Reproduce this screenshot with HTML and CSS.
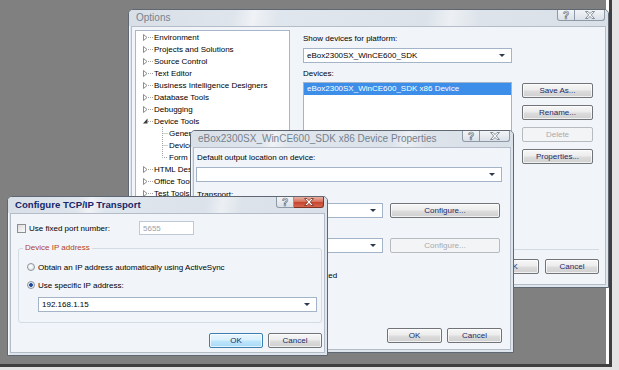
FILE: index.html
```html
<!DOCTYPE html>
<html lang="en">
<head>
    <meta charset="UTF-8">
    <title>Device Tools Options</title>
    <link rel="stylesheet" href="styles.css">
</head>
<body>

<div class="desktop">

    <!-- Options dialog (inactive, at the back) -->
    <div class="win options-win">
        <div class="titlebar">
            <span class="title">Options</span>
            <div class="caption">
                <span class="cap-help">?</span>
                <span class="cap-close"><svg width="10" height="8" viewBox="0 0 10 8"><path d="M0.5 0.5 H3 L5 2.6 L7 0.5 H9.5 L6.3 4 L9.5 7.5 H7 L5 5.4 L3 7.5 H0.5 L3.7 4 Z" fill="#f4f6f8" stroke="#6f7a86" stroke-width="0.8"/></svg></span>
            </div>
        </div>
        <div class="client">
            <div class="opt-main">
                <div class="tree">
                    <div class="node"><svg width="11" height="12"><path d="M0.5 3.5 L4 6.5 L0.5 9.5 Z" fill="#fff" stroke="#8d8d8d"/><path d="M5 6.5 H10" stroke="#a5a5a5" stroke-dasharray="1 1"/></svg>Environment</div>
                    <div class="node"><svg width="11" height="12"><path d="M0.5 3.5 L4 6.5 L0.5 9.5 Z" fill="#fff" stroke="#8d8d8d"/><path d="M5 6.5 H10" stroke="#a5a5a5" stroke-dasharray="1 1"/></svg>Projects and Solutions</div>
                    <div class="node"><svg width="11" height="12"><path d="M0.5 3.5 L4 6.5 L0.5 9.5 Z" fill="#fff" stroke="#8d8d8d"/><path d="M5 6.5 H10" stroke="#a5a5a5" stroke-dasharray="1 1"/></svg>Source Control</div>
                    <div class="node"><svg width="11" height="12"><path d="M0.5 3.5 L4 6.5 L0.5 9.5 Z" fill="#fff" stroke="#8d8d8d"/><path d="M5 6.5 H10" stroke="#a5a5a5" stroke-dasharray="1 1"/></svg>Text Editor</div>
                    <div class="node"><svg width="11" height="12"><path d="M0.5 3.5 L4 6.5 L0.5 9.5 Z" fill="#fff" stroke="#8d8d8d"/><path d="M5 6.5 H10" stroke="#a5a5a5" stroke-dasharray="1 1"/></svg>Business Intelligence Designers</div>
                    <div class="node"><svg width="11" height="12"><path d="M0.5 3.5 L4 6.5 L0.5 9.5 Z" fill="#fff" stroke="#8d8d8d"/><path d="M5 6.5 H10" stroke="#a5a5a5" stroke-dasharray="1 1"/></svg>Database Tools</div>
                    <div class="node"><svg width="11" height="12"><path d="M0.5 3.5 L4 6.5 L0.5 9.5 Z" fill="#fff" stroke="#8d8d8d"/><path d="M5 6.5 H10" stroke="#a5a5a5" stroke-dasharray="1 1"/></svg>Debugging</div>
                    <div class="node"><svg width="11" height="12"><path d="M4.5 3.5 V8.5 H0 Z" fill="#3c3c3c"/><path d="M5 6.5 H10" stroke="#a5a5a5" stroke-dasharray="1 1"/></svg>Device Tools</div>
                    <div class="node"><svg width="26" height="12"><path d="M19.5 0 V12 M19.5 6.5 H25" stroke="#a5a5a5" stroke-dasharray="1 1"/></svg>General</div>
                    <div class="node"><svg width="26" height="12"><path d="M19.5 0 V12 M19.5 6.5 H25" stroke="#a5a5a5" stroke-dasharray="1 1"/></svg>Devices</div>
                    <div class="node"><svg width="26" height="12"><path d="M19.5 0 V6.5 H25" fill="none" stroke="#a5a5a5" stroke-dasharray="1 1"/></svg>Form Factors</div>
                    <div class="node"><svg width="11" height="12"><path d="M0.5 3.5 L4 6.5 L0.5 9.5 Z" fill="#fff" stroke="#8d8d8d"/><path d="M5 6.5 H10" stroke="#a5a5a5" stroke-dasharray="1 1"/></svg>HTML Designer</div>
                    <div class="node"><svg width="11" height="12"><path d="M0.5 3.5 L4 6.5 L0.5 9.5 Z" fill="#fff" stroke="#8d8d8d"/><path d="M5 6.5 H10" stroke="#a5a5a5" stroke-dasharray="1 1"/></svg>Office Tools</div>
                    <div class="node"><svg width="11" height="12"><path d="M0.5 3.5 L4 6.5 L0.5 9.5 Z" fill="#fff" stroke="#8d8d8d"/><path d="M5 6.5 H10" stroke="#a5a5a5" stroke-dasharray="1 1"/></svg>Test Tools</div>
                    <div class="node"><svg width="11" height="12"><path d="M0.5 3.5 L4 6.5 L0.5 9.5 Z" fill="#fff" stroke="#8d8d8d"/><path d="M5 6.5 H10" stroke="#a5a5a5" stroke-dasharray="1 1"/></svg>Text Templating</div>
                    <div class="node"><svg width="11" height="12"><path d="M0.5 3.5 L4 6.5 L0.5 9.5 Z" fill="#fff" stroke="#8d8d8d"/><path d="M5 6.5 H10" stroke="#a5a5a5" stroke-dasharray="1 1"/></svg>Windows Forms Designer</div>
                </div>

                <div class="opt-devices">
                    <div class="lbl first">Show devices for platform:</div>
                    <div class="combo"><span>eBox2300SX_WinCE600_SDK</span><i class="arrow"></i></div>
                    <div class="lbl devices-lbl">Devices:</div>
                    <div class="listbox">
                        <div class="list-item selected">eBox2300SX_WinCE600_SDK x86 Device</div>
                    </div>
                </div>

                <div class="side-buttons">
                    <div class="btn">Save As...</div>
                    <div class="btn">Rename...</div>
                    <div class="btn disabled">Delete</div>
                    <div class="btn">Properties...</div>
                </div>
            </div>
            <div class="opt-foot">
                <div class="btn">OK</div>
                <div class="btn">Cancel</div>
            </div>
        </div>
    </div>

    <!-- Device Properties dialog -->
    <div class="win props-win">
        <div class="titlebar">
            <span class="title">eBox2300SX_WinCE600_SDK x86 Device Properties</span>
            <div class="caption">
                <span class="cap-help">?</span>
                <span class="cap-close"><svg width="10" height="8" viewBox="0 0 10 8"><path d="M0.5 0.5 H3 L5 2.6 L7 0.5 H9.5 L6.3 4 L9.5 7.5 H7 L5 5.4 L3 7.5 H0.5 L3.7 4 Z" fill="#f4f6f8" stroke="#6f7a86" stroke-width="0.8"/></svg></span>
            </div>
        </div>
        <div class="client props-body">
            <div class="lbl">Default output location on device:</div>
            <div class="combo output-combo"><span></span><i class="arrow"></i></div>
            <div class="lbl transport-lbl">Transport:</div>
            <div class="prop-row first-row">
                <div class="combo"><span>TCP Connect Transport</span><i class="arrow"></i></div>
                <div class="btn">Configure...</div>
            </div>
            <div class="lbl boot-lbl">Bootstrapper:</div>
            <div class="prop-row second-row">
                <div class="combo"><span>ActiveSync Startup Provider</span><i class="arrow"></i></div>
                <div class="btn disabled">Configure...</div>
            </div>
            <div class="check-row detect-row">
                <span class="checkbox"></span>
                <span>Detect when device is disconnected</span>
            </div>
            <div class="btn-row">
                <div class="btn">OK</div>
                <div class="btn">Cancel</div>
            </div>
        </div>
    </div>

    <!-- Configure TCP/IP Transport dialog (active) -->
    <div class="win tcp-win active">
        <div class="titlebar">
            <span class="title">Configure TCP/IP Transport</span>
            <div class="caption">
                <span class="cap-help">?</span>
                <span class="cap-close"><svg width="10" height="8" viewBox="0 0 10 8"><path d="M0.5 0.5 H3 L5 2.6 L7 0.5 H9.5 L6.3 4 L9.5 7.5 H7 L5 5.4 L3 7.5 H0.5 L3.7 4 Z" fill="#fff" stroke="#7b2b1d" stroke-width="0.8"/></svg></span>
            </div>
        </div>
        <div class="client tcp-body">
            <div class="port-row">
                <span class="checkbox"></span>
                <span class="port-lbl">Use fixed port number:</span>
                <div class="textbox disabled">5655</div>
            </div>
            <fieldset class="group">
                <legend>Device IP address</legend>
                <div class="radio-row">
                    <span class="radio"></span>
                    <span>Obtain an IP address automatically using ActiveSync</span>
                </div>
                <div class="radio-row second">
                    <span class="radio on"></span>
                    <span>Use specific IP address:</span>
                </div>
                <div class="combo ip-combo"><span>192.168.1.15</span><i class="arrow"></i></div>
            </fieldset>
            <div class="btn-row tcp-buttons">
                <div class="btn default">OK</div>
                <div class="btn">Cancel</div>
            </div>
        </div>
    </div>

</div>

</body>
</html>
```

FILE: styles.css
```css
body {
    margin: 0;
    background: #e4e4e4;
    font-family: "Liberation Sans", Arial, sans-serif;
    font-size: 8px;
    color: #000;
}

/* backdrop behind the dialogs */
.desktop {
    position: relative;
    width: 609px;
    height: 364px;
    background: #808080;
    box-shadow: inset -3px 0 0 #fdfdfd;
    border-right: 3px solid #3f3f3f;
    border-bottom: 3px solid #3f3f3f;
    overflow: hidden;
}

/* window chrome */
.win {
    position: absolute;
    box-sizing: border-box;
    display: flex;
    flex-direction: column;
    padding: 0 2px 2px;
    border: 1px solid #5e6772;
    border-radius: 5px 5px 0 0;
    background: #dfe5ec;
    box-shadow: inset 1px 1px 0 #f7f9fb;
}
.options-win { left: 128px; top: 9px; width: 481px; height: 279px; }
.props-win { left: 190px; top: 130px; width: 324px; height: 223px; }
.tcp-win { left: 7px; top: 196px; width: 321px; height: 160px; }

.titlebar {
    height: 16px;
    margin: 0 -2px;
    padding: 0 3px 0 7px;
    display: flex;
    align-items: flex-start;
    border-radius: 4px 4px 0 0;
    background: linear-gradient(100deg, #d8dfe7 0%, #dfe5ec 22%, #eff2f6 26%, #e0e6ed 31%, #dbe2ea 62%, #ecf0f4 67%, #dde3ea 73%, #d9e0e8 100%);
}
.title {
    line-height: 16px;
    font-size: 10px;
    color: #76818e;
    white-space: nowrap;
}
.active .title {
    font-size: 9.6px;
    font-weight: bold;
    color: #17276a;
}
.caption {
    margin-left: auto;
    display: flex;
}
.cap-help, .cap-close {
    height: 11px;
    box-sizing: border-box;
    display: flex;
    align-items: center;
    justify-content: center;
    border: 1px solid #8e99a6;
    border-top: 0;
    background: linear-gradient(#f2f4f7, #dbe1e8);
}
.cap-help {
    width: 18px;
    border-radius: 0 0 0 3px;
    font-size: 10px;
    font-weight: bold;
    color: #f4f6f8;
    -webkit-text-stroke: 0.7px #6f7a86;
}
.cap-close {
    width: 30px;
    border-left: 0;
    border-radius: 0 0 3px 0;
}
.active .cap-close {
    border-color: #7d3326;
    background: linear-gradient(#eab1a3 0%, #d67560 45%, #c6452f 55%, #d7664d 100%);
}

.client {
    flex: 1;
    min-height: 0;
    border: 1px solid #b3bcc7;
    background: #f1f4f9;
}

/* shared controls */
.lbl {
    line-height: 12px;
    white-space: nowrap;
}
.btn {
    height: 15px;
    box-sizing: border-box;
    display: flex;
    align-items: center;
    justify-content: center;
    border: 1px solid #707479;
    border-radius: 2px;
    background: linear-gradient(#f7f7f7 0%, #ececec 48%, #dddddd 52%, #cfcfcf 100%);
    box-shadow: inset 0 0 0 1px rgba(255, 255, 255, 0.7);
    color: #1c2a66;
    white-space: nowrap;
}
.btn.disabled {
    border-color: #b7babe;
    background: #f3f4f5;
    box-shadow: none;
    color: #a7abb0;
}
.btn.default {
    border-color: #3c7fb1;
    background: linear-gradient(#eaf6fd 0%, #d9f0fc 48%, #bee6fd 52%, #a7d9f5 100%);
}
.combo {
    height: 15px;
    box-sizing: border-box;
    display: flex;
    align-items: center;
    padding-left: 3px;
    border: 1px solid #a3b4c9;
    background: #fff;
    white-space: nowrap;
    overflow: hidden;
}
.combo .arrow {
    margin-left: auto;
    margin-right: 6px;
    flex: none;
    border-left: 3px solid transparent;
    border-right: 3px solid transparent;
    border-top: 3px solid #2d3a4e;
}
.checkbox {
    width: 9px;
    height: 9px;
    flex: none;
    box-sizing: border-box;
    border: 1px solid #8e8f8f;
    background: linear-gradient(135deg, #dcdcdc, #fbfbfb);
}
.radio {
    width: 8px;
    height: 8px;
    flex: none;
    box-sizing: border-box;
    border: 1px solid #8b949d;
    border-radius: 50%;
    background: radial-gradient(circle at 40% 40%, #fff, #d8dadc);
}
.radio.on {
    background: radial-gradient(circle, #1c3b7c 0, #2c59a8 1.6px, #e9ecef 2.2px);
}

/* Options dialog */
.opt-main {
    display: flex;
    height: 222px;
    box-sizing: border-box;
    padding: 3px 12px 0 3px;
}
.tree {
    width: 155px;
    height: 216px;
    flex: none;
    box-sizing: border-box;
    border: 1px solid #a7b6c8;
    background: #fff;
    overflow: hidden;
}
.node {
    display: flex;
    align-items: center;
    height: 12px;
    padding-left: 7px;
    white-space: nowrap;
}
.node svg {
    flex: none;
}
.opt-devices {
    width: 209px;
    margin-left: 13px;
    flex: none;
}
.opt-devices .first { margin-top: 3px; }
.opt-devices .combo { margin-top: 3px; }
.devices-lbl { margin-top: 5px; }
.listbox {
    margin-top: 2px;
    height: 161px;
    border: 1px solid #a3b4c9;
    background: #fff;
}
.list-item {
    height: 12px;
    line-height: 12px;
    padding-left: 3px;
    white-space: nowrap;
}
.list-item.selected {
    background: #3d8ee8;
    color: #fff;
}
.side-buttons {
    width: 71px;
    margin-left: 10px;
    padding-top: 53px;
    display: flex;
    flex-direction: column;
    gap: 7px;
}
.opt-foot {
    margin: 0 6px 0 3px;
    padding-top: 9px;
    border-top: 1px solid #d4dae2;
    display: flex;
    justify-content: flex-end;
    gap: 6px;
}
.opt-foot .btn { width: 54px; }

/* Device properties dialog */
.props-body {
    display: flex;
    flex-direction: column;
    padding: 4px 8px 6px 2px;
}
.props-body .lbl { padding-left: 1px; }
.output-combo { margin-top: 3px; }
.transport-lbl { margin-top: 7px; }
.prop-row {
    display: flex;
    gap: 7px;
}
.prop-row .combo { width: 187px; }
.prop-row .btn { width: 110px; }
.first-row { margin-top: 2px; }
.boot-lbl { margin-top: 5px; }
.second-row { margin-top: 3px; }
.check-row {
    display: flex;
    align-items: center;
    gap: 4px;
    height: 12px;
    padding-left: 1px;
    white-space: nowrap;
}
.detect-row { margin-top: 16px; }
.btn-row {
    margin-top: auto;
    display: flex;
    justify-content: flex-end;
    gap: 5px;
}
.btn-row .btn { width: 55px; }

/* TCP/IP transport dialog */
.tcp-body {
    padding: 7px 2px 0 0;
}
.port-row {
    display: flex;
    align-items: center;
    height: 14px;
}
.port-row .checkbox { margin-left: 6px; }
.port-lbl {
    width: 110px;
    margin-left: 3px;
    white-space: nowrap;
}
.textbox {
    width: 55px;
    height: 14px;
    box-sizing: border-box;
    display: flex;
    align-items: center;
    padding-left: 3px;
    border: 1px solid #a3b4c9;
    background: #fff;
}
.textbox.disabled {
    border-color: #bfcad6;
    color: #9aa2ab;
}
.group {
    margin: 7px 0 0 7px;
    padding: 7px 4px 10px 8px;
    min-width: 0;
    border: 1px solid #d3dbe3;
    border-radius: 3px;
}
.group legend {
    margin-left: -4px;
    padding: 0 2px;
    line-height: 12px;
    color: #b0452a;
}
.radio-row {
    display: flex;
    align-items: center;
    gap: 3px;
    height: 12px;
    white-space: nowrap;
}
.radio-row.second { margin-top: 6px; }
.ip-combo {
    margin: 6px 0 0 11px;
}
.tcp-buttons {
    margin-top: 10px;
}
.tcp-buttons .btn { width: 54px; }
```
